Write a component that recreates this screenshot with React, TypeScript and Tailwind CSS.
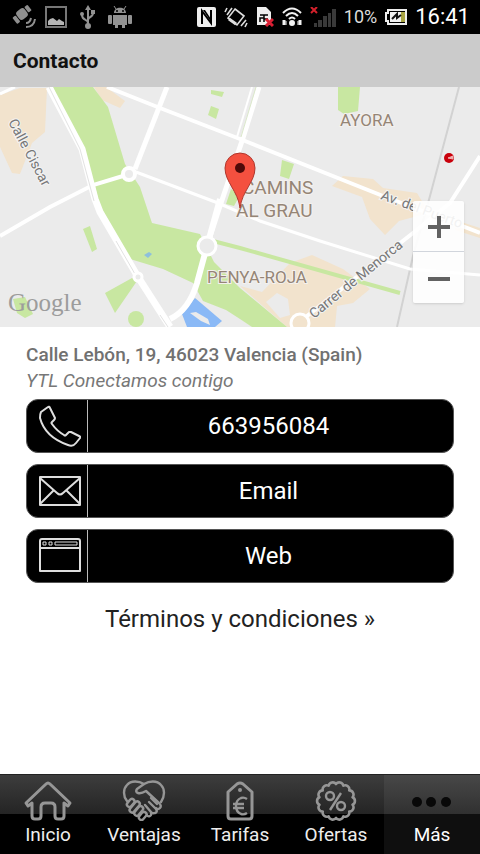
import type { ReactNode } from "react";

const StatusBar = () => {
  return (
    <div className="h-[34px] shrink-0 bg-black flex flex-row items-center justify-between pl-3 pr-[10px] text-white">
      <div className="flex flex-row items-center">
        <svg className="w-6 h-6" viewBox="0 0 24 24" fill="#8f8f8f">
          <g transform="rotate(-38 10 9)">
            <rect x="5" y="4" width="10" height="10" rx="3" />
            <rect x="0" y="6" width="4" height="8" rx="1" />
            <rect x="16" y="5" width="4" height="7" rx="1" />
          </g>
          <path
            d="M14 18q4 0 5-5M14 22q8 0 9-8"
            fill="none"
            stroke="#8f8f8f"
            strokeWidth="2"
          />
        </svg>
        <svg className="w-6 h-6 ml-2" viewBox="0 0 24 24">
          <rect x="2" y="2" width="20" height="20" fill="none" stroke="#777" strokeWidth="2" />
          <path d="M4 20v-4l2-2 3-1 4 3 2-2 3 2 2 1v3z" fill="#b5b5b5" />
        </svg>
        <svg className="w-4 h-6 ml-3" viewBox="0 0 16 24" fill="none" stroke="#929292" strokeWidth="2">
          <path d="M8 4v18M8 18c0-4-6-2-6-8M8 15c0-4 5-2 5-7" />
          <path d="M8 0l3 5H5z" fill="#929292" stroke="none" />
          <circle cx="8" cy="21" r="2" fill="#929292" />
          <circle cx="2" cy="9" r="1" fill="#929292" />
          <path d="M11 5h4v4h-4z" fill="#929292" stroke="none" />
        </svg>
        <svg className="w-6 h-6 ml-3" viewBox="0 0 24 24" fill="#929292">
          <path d="M6 8c0-7 12-7 12 0zM5 10h14v10h-2v3h-3v-3h-4v3H7v-3H5z" />
          <rect x="0" y="10" width="4" height="9" rx="1" />
          <rect x="20" y="10" width="4" height="9" rx="1" />
          <path d="M8 4L6 1M16 4l2-3" stroke="#929292" />
          <circle cx="9" cy="6" r="1" fill="#000" />
          <circle cx="15" cy="6" r="1" fill="#000" />
        </svg>
      </div>
      <div className="flex flex-row items-center gap-2">
        <svg className="w-[19px] h-5" viewBox="0 0 19 20">
          <rect width="19" height="20" rx="2" fill="#eee" />
          <path d="M5 17V4l9 12V3" fill="none" stroke="#000" strokeWidth="2" />
          <path d="M6 3h2l6 9v3z" fill="#000" />
        </svg>
        <svg className="w-6 h-6" viewBox="0 0 24 24" fill="none" stroke="#ddd" strokeWidth="1.6">
          <path d="M11 4l9 7-7 9-9-7z" />
          <path d="M5 14l7 5" strokeWidth="3" />
          <path d="M1 7l2-4M3 10l5-7M17 21l5-6M21 22l2-4" />
        </svg>
        <svg className="w-[18px] h-5" viewBox="0 0 18 20">
          <path d="M1 0h9l5 5v13H1z" fill="#eee" />
          <path d="M4 8h8M4 15v-4h4v-3M8 15v-3h4" fill="none" stroke="#000" strokeWidth="1.5" />
          <path d="M10 12l7 7M17 12l-7 7" stroke="#d91f33" strokeWidth="3" />
        </svg>
        <svg className="w-5 h-5" viewBox="0 0 20 20" fill="none" stroke="#f2f2f2" strokeWidth="2">
          <path d="M1 6q9-9 18 0M4 9q6-6 12 0M7 12q3-3 6 0" />
          <circle cx="10" cy="16" r="2" fill="#f2f2f2" />
          <path d="M2 13v5M18 13v5" strokeWidth="3" />
          <path d="M4 14v4M16 14v4" strokeWidth="1" />
        </svg>
        <svg className="w-[26px] h-5" viewBox="0 0 26 20" fill="#3a3a3a">
          <rect x="4" y="16" width="3" height="4" />
          <rect x="8" y="13" width="4" height="7" />
          <rect x="13" y="9" width="4" height="11" />
          <rect x="18" y="6" width="3" height="14" />
          <rect x="22" y="2" width="4" height="18" />
          <path d="M1 0l6 6M7 0L1 6" stroke="#d4202b" strokeWidth="2" />
        </svg>
        <span className="text-lg leading-6 text-[#dcdcdc]">10%</span>
        <svg className="w-[22px] h-4" viewBox="0 0 22 16">
          <path d="M3 1h18v14H3v-3H1V4h2z" fill="none" stroke="#eee" strokeWidth="2" />
          <rect x="5" y="3" width="11" height="10" fill="#f2f2f2" />
          <rect x="16" y="3" width="4" height="10" fill="#a9a544" />
          <path d="M7 10l5-5v4l4-3" fill="none" stroke="#111" strokeWidth="2" />
        </svg>
        <span className="text-[22px] leading-6">16:41</span>
      </div>
    </div>
  );
};

const MapView = () => {
  return (
    <div className="relative h-60 shrink-0 overflow-hidden bg-[#ebebeb]">
      <svg
        className="w-full h-full"
        viewBox="0 0 480 240"
        preserveAspectRatio="xMidYMid slice"
        fontFamily="Roboto, sans-serif"
      >
        <rect width="480" height="240" fill="#ebebeb" />
        <g fill="#f2e3cd">
          <path d="M0 8L20 1H47L45 45 32 56 20 87 12 86 0 60z" />
          <path d="M94 0h12l19 14-5 7-18-8z" />
          <path d="M332 99l11-10 30 3 10 9 34 5 12 20-30 8-14 14-15-16-8-22z" />
          <path d="M290 176l22-8 31 14 27 20-17 14-16 3-2 21h-48l-47-41 22 6z" />
          <path d="M455 133l25 8v10l-25-8z" />
        </g>
        <path d="M266 215l11-9 11 6 2 16-10 3z" fill="#ebebeb" />
        <g fill="#c8e7a1">
          <path d="M53 0H93L108 20 125 77 140 100 152 136 200 147 214 175 240 201 287 240H252L240 232 226 223 203 214 193 196 163 182 130 172 100 119 95 100 78 58z" />
          <path d="M211 3l13 2-2 5-11-3zM211 19l8 3-3 10-8-4zM338 0h22l-2 24-14 3-6-4zM282 73l12 4-5 15-9-3zM231 102l9 6-6 11-8-2z" />
          <path d="M83 142l7-3 7 23-5 3zM105 206l27-15 5 3-22 32zM13 212l12-2 8 17-8 4-8-5z" />
          <circle cx="136" cy="232" r="8" />
        </g>
        <path d="M213 154L240 161 400 206" stroke="#c8e7a1" strokeWidth="4" fill="none" />
        <path d="M182 227L195 211 222 234 215 240H187z" fill="#8ab9f6" />
        <path d="M190 226l6-1 12 7 2 6-9-4z" fill="#ebebeb" />
        <path d="M144 168l5-3 3 2-4 4z" fill="#8dbfdc" />

        <path d="M459 0L430 109 413 169 397 240" stroke="#d2d2d2" strokeWidth="2" fill="none" />
        <g stroke="#fff" fill="none">
          <path d="M0 7L15 0" strokeWidth="3" />
          <path d="M49 0L82 62 95 112 100 125 138 190 170 240" strokeWidth="7" />
          <path d="M167 0L135 82" strokeWidth="5" />
          <path d="M107 0L160 21 240 52 383 109 457 137 480 146" strokeWidth="4" />
          <path d="M123 89L93 98 50 120 0 149" strokeWidth="4" />
          <path d="M136 85L218 116 260 134 320 154 410 182 480 188" strokeWidth="3" />
          <path d="M259 0L242 54 220 119 207 159" strokeWidth="5" />
          <path d="M252 0L237 50" strokeWidth="2" />
          <path d="M220 112L207 159 197 196Q189 223 170 232" strokeWidth="6" />
          <path d="M307 229L413 146 450 116 480 69" strokeWidth="4" />
        </g>
        <path d="M49 0L80 62 94 114M116 154L135 187M160 228l8 12" stroke="#e2e2e2" fill="none" />
        <path d="M256 0L241 50" stroke="#dbe8ca" fill="none" />
        <g fill="#ebebeb" stroke="#fff">
          <circle cx="129" cy="87" r="6" strokeWidth="4" />
          <circle cx="207" cy="159" r="9" strokeWidth="3" />
          <circle cx="138" cy="190" r="4" strokeWidth="3" />
          <circle cx="300" cy="236" r="9" strokeWidth="3" fill="#f2e3cd" />
        </g>

        <g fontSize="17" fill="#958576" stroke="#f4f1ee" strokeWidth="2" paintOrder="stroke">
          <text x="340" y="39">AYORA</text>
          <text x="207" y="196">PENYA-ROJA</text>
          <text x="242" y="107" fontSize="19">CAMINS</text>
          <text x="236" y="130" fontSize="19">AL GRAU</text>
        </g>
        <g fontSize="14" fill="#777" stroke="#f3f3f3" strokeWidth="2" paintOrder="stroke">
          <text transform="translate(8 35) rotate(62)">Calle Ciscar</text>
          <text transform="translate(380 112) rotate(20)">Av. del Puerto</text>
          <text transform="translate(314 232) rotate(-39)">Carrer de Menorca</text>
        </g>
        <text x="8" y="224" fontSize="25" fontFamily="Liberation Serif, serif" fill="#9c9c9c">
          Google
        </text>

        <circle cx="449" cy="71" r="5" fill="#c9000b" />
        <path d="M448 71l5-2v3z" fill="#f0b0b0" stroke="#f0b0b0" />
        <path
          d="M240 121C238 104 225 95 225 81a15 15 0 0 1 30 0C255 95 242 104 240 121z"
          fill="#f4503f"
          stroke="#b0382d"
        />
        <circle cx="240" cy="81" r="5" fill="#4f0a09" />
      </svg>
      <div className="absolute right-4 bottom-6 w-[51px] flex flex-col bg-white/90 rounded-xs shadow">
        <button
          aria-label="Acercar"
          className="h-[51px] flex items-center justify-center border-b border-gray-300"
        >
          <svg className="w-6 h-6" viewBox="0 0 24 24" stroke="#626262" strokeWidth="4">
            <path d="M1 13h22M12 2v22" />
          </svg>
        </button>
        <button aria-label="Alejar" className="h-[51px] flex items-center justify-center">
          <svg className="w-6 h-6" viewBox="0 0 24 24" stroke="#626262" strokeWidth="4">
            <path d="M1 13h22" />
          </svg>
        </button>
      </div>
    </div>
  );
};

const ContactLink = ({
  href,
  label,
  children,
}: {
  href: string;
  label: string;
  children: ReactNode;
}) => {
  return (
    <a
      href={href}
      className="h-[54px] flex flex-row items-stretch bg-black rounded-xl border border-[#555] text-white overflow-hidden"
    >
      <span className="w-[61px] pl-[6px] flex items-center justify-center border-r border-[#bbb]">
        <svg
          className="w-[42px] h-[42px]"
          viewBox="0 0 42 42"
          fill="none"
          stroke="#dedede"
          strokeWidth="2"
          strokeLinejoin="round"
        >
          {children}
        </svg>
      </span>
      <span className="flex-1 pr-1 flex items-center justify-center text-2xl">{label}</span>
    </a>
  );
};

// scalloped edge of the discount badge
const badgePath = () => {
  const bumps = 14;
  let d = "";
  for (let i = 0; i <= bumps; i++) {
    const angle = (i / bumps) * Math.PI * 2;
    const x = (24 + Math.sin(angle) * 17).toFixed(2);
    const y = (22 - Math.cos(angle) * 17).toFixed(2);
    d += i === 0 ? `M${x} ${y}` : `A4.2 4.2 0 0 1 ${x} ${y}`;
  }
  return d + "z";
};

const tabs = [
  {
    label: "Inicio",
    icon: (
      <path d="M2 24L22 5q2-2 4 0l20 19-2 3-4-3v13q0 3-3 3h-3q-3 0-3-3v-9q0-4-4-4h-6q-4 0-4 4v9q0 3-3 3h-3q-3 0-3-3V24l-4 3z" />
    ),
  },
  {
    label: "Ventajas",
    icon: (
      <g strokeWidth="2.4" strokeLinecap="round">
        <path d="M7 22C3 17 3 10 7 6c4-5 12-4 17-1 5-3 13-4 17 1 4 4 4 11 0 17" />
        <path d="M24 5l-7 5q-2 3 1 4 3 1 8-2l13 12q3 3 1 5t-4 0" />
        <path d="M29 23l7 7q2 3-1 4-2 1-4-1M25 26l6 7q1 3-1 4-2 1-3-1M31 19l6 6" />
        <rect x="6" y="22" width="9" height="5" rx="2.5" transform="rotate(-50 10 24)" />
        <rect x="8" y="26" width="13" height="5" rx="2.5" transform="rotate(-50 14 28)" />
        <rect x="13" y="30" width="11" height="5" rx="2.5" transform="rotate(-50 18 32)" />
        <rect x="18" y="35" width="9" height="5" rx="2.5" transform="rotate(-50 22 37)" />
      </g>
    ),
  },
  {
    label: "Tarifas",
    icon: (
      <>
        <path d="M12 13L21 5q3-2 6 0l9 8v24q0 3-3 3H15q-3 0-3-3z" />
        <circle cx="24" cy="11" r="2" fill="#969696" stroke="none" />
        <path d="M31 20q-3-2-6-1-5 2-5 8t5 8q3 1 6-1M17 25h11M17 29h11" strokeWidth="2.4" />
      </>
    ),
  },
  {
    label: "Ofertas",
    icon: (
      <>
        <path d={badgePath()} strokeWidth="2.6" />
        <circle cx="18" cy="17" r="4" strokeWidth="2.4" />
        <circle cx="29" cy="27" r="4" strokeWidth="2.4" />
        <path d="M29 14L18 31" strokeWidth="2.4" />
      </>
    ),
  },
  {
    label: "Más",
    icon: (
      <g fill="#080808" stroke="none">
        <circle cx="9" cy="23" r="5" />
        <circle cx="23" cy="23" r="5" />
        <circle cx="38" cy="23" r="5" />
      </g>
    ),
  },
];

const TabBar = () => {
  return (
    <nav className="h-20 shrink-0 grid grid-cols-5 border-t border-[#222] bg-linear-to-b from-[#3d3d3d] from-0% via-[#242424] via-50% to-black to-50%">
      {tabs.map((tab) => (
        <button
          key={tab.label}
          className={
            tab.label === "Más"
              ? "flex flex-col items-center pt-1 bg-white/6 text-white"
              : "flex flex-col items-center pt-1 text-[#eee]"
          }
        >
          <svg
            className="w-12 h-[42px]"
            viewBox="0 0 48 42"
            fill="none"
            stroke="#969696"
            strokeWidth="3"
            strokeLinejoin="round"
          >
            {tab.icon}
          </svg>
          <span className="text-[19px] leading-6 mt-[2px]">{tab.label}</span>
        </button>
      ))}
    </nav>
  );
};

const App = () => {
  return (
    <div className="min-h-screen flex flex-col bg-white font-[Roboto,sans-serif]">
      <StatusBar />
      <header className="h-[53px] shrink-0 flex items-center px-[13px] bg-[#cbcbcb]">
        <h1 className="text-[21px] leading-6 font-bold text-[#111]">Contacto</h1>
      </header>
      <MapView />
      <main className="flex-1 px-[26px] pt-[15px] flex flex-col">
        <p className="text-[19px] leading-[26px] font-medium text-[#717171]">
          Calle Lebón, 19, 46023 Valencia (Spain)
        </p>
        <p className="text-[19px] leading-[26px] italic text-[#777]">YTL Conectamos contigo</p>
        <div className="mt-[5px] flex flex-col gap-[11px]">
          <ContactLink href="tel:663956084" label="663956084">
            <path d="M2 7L9 2q1-1 2 1l5 10q0 1-1 2l-2 2q-1 1 0 2 5 7 12 11 1 1 2 0l3-3q1 0 2 0l8 4q2 1 1 2l-4 5q-3 4-8 2Q6 32 1 13q0-4 1-6z" />
          </ContactLink>
          <ContactLink href="mailto:" label="Email">
            <path d="M1 7h40v28H1zM1 8l17 15q3 3 6 0L41 8M1 34l14-14M41 34L27 20" />
          </ContactLink>
          <ContactLink href="#web" label="Web">
            <path d="M1 6q0-2 2-2h36q2 0 2 2v30H1zM1 13h40" />
            <path d="M4 7h3v3H4zM10 7h3v3h-3zM16 7h22v3H16z" strokeWidth="1" />
          </ContactLink>
        </div>
        <a href="#terminos" className="mt-5 self-center text-2xl text-[#222]">
          Términos y condiciones »
        </a>
      </main>
      <TabBar />
    </div>
  );
};

export default App;
